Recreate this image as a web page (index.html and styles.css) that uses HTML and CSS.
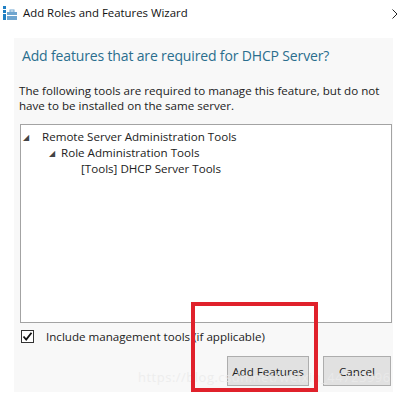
FILE: index.html
```html
<!DOCTYPE html>
<html>
<head>
<meta charset="utf-8">
<link rel="stylesheet" href="styles.css">
</head>
<body>
<div class="window">
  <div class="titlebar">
    <svg class="appicon" width="14" height="14" viewBox="0 0 14 14">
      <rect x="0" y="0" width="3" height="3" fill="#1f7fc4"/>
      <rect x="0" y="4" width="3" height="3" fill="#1f7fc4"/>
      <rect x="0" y="8" width="3" height="6" fill="#1f7fc4"/>
      <rect x="4" y="6" width="10" height="8" fill="#6fa5cf"/>
      <rect x="7" y="4" width="4" height="2" fill="none" stroke="#6fa5cf" stroke-width="1"/>
      <rect x="4" y="9" width="10" height="1" fill="#ffffff"/>
    </svg>
    <span class="title">Add Roles and Features Wizard</span>
    <svg class="close" width="6" height="10" viewBox="0 0 6 10">
      <path d="M0.5 0.5 L5 5 L0.5 9.5" fill="none" stroke="#222" stroke-width="1"/>
    </svg>
  </div>
  <div class="content">
    <h1 class="heading">Add features that are required for DHCP Server?</h1>
    <p class="desc">The following tools are required to manage this feature, but do not have to be installed on the same server.</p>
    <div class="tree">
      <div class="node lvl0"><span class="tri">&#9698;</span>Remote Server Administration Tools</div>
      <div class="node lvl1"><span class="tri">&#9698;</span>Role Administration Tools</div>
      <div class="node lvl2">[Tools] DHCP Server Tools</div>
    </div>
    <label class="check">
      <span class="box"><svg width="11" height="11" viewBox="0 0 11 11"><path d="M1.5 5.5 L4.2 8.5 L9.5 1.8" fill="none" stroke="#111" stroke-width="1.8"/></svg></span>
      Include management tools (if applicable)
    </label>
    <div class="buttons">
      <button class="btn add">Add Features</button>
      <button class="btn cancel">Cancel</button>
    </div>
    <div class="watermark">https://blog.csdn.net/weixin_44723996</div>
  </div>
  <div class="highlight"></div>
</div>
</body>
</html>
```
FILE: styles.css
```css
html, body {
  margin: 0;
  padding: 0;
  background: #ffffff;
}
body {
  font-family: "Segoe UI", "Open Sans", "Noto Sans", sans-serif;
  color: #1e1e1e;
  width: 398px;
  height: 397px;
  overflow: hidden;
}
.window {
  position: relative;
  width: 398px;
  height: 397px;
}
.titlebar {
  height: 38px;
  display: flex;
  align-items: flex-start;
  padding: 5px 0 0 3px;
  box-sizing: border-box;
}
.appicon {
  margin-top: 1px;
}
.title {
  margin-left: 6px;
  font-size: 11.4px;
  line-height: 16px;
  color: #111;
}
.close {
  margin-left: auto;
  margin-top: 4px;
  margin-right: 0;
}
.content {
  position: relative;
  margin-left: 14px;
  width: 379px;
  height: 354px;
  background: #f8f8f8;
  padding: 0 0 0 6px;
  box-sizing: border-box;
  display: flex;
  flex-direction: column;
}
.heading {
  margin: 8px 0 0 2px;
  font-weight: normal;
  font-size: 14px;
  letter-spacing: -0.15px;
  line-height: 20px;
  color: #2a6e8e;
}
.desc {
  margin: 17px 0 0 -1px;
  font-size: 11.6px;
  line-height: 15px;
  color: #222;
  width: 370px;
}
.tree {
  margin-top: 11px;
  width: 372px;
  height: 199px;
  box-sizing: border-box;
  background: #ffffff;
  border: 1px solid #a3a3a3;
  padding-top: 4px;
  font-size: 11.6px;
  line-height: 16px;
  color: #222;
}
.node {
  white-space: nowrap;
}
.tri {
  display: inline-block;
  font-size: 8px;
  width: 12px;
  color: #444;
  vertical-align: 1px;
}
.lvl0 { padding-left: 2px; }
.lvl0 .tri { width: 19px; }
.lvl1 { padding-left: 28px; }
.lvl1 .tri { width: 12px; }
.lvl2 { padding-left: 60px; }
.check {
  display: flex;
  align-items: center;
  margin-top: 6px;
  margin-left: 1px;
  font-size: 11.6px;
  color: #222;
  height: 15px;
}
.box {
  width: 11px;
  height: 11px;
  border: 1px solid #333;
  background: #fff;
  margin-right: 12px;
  display: flex;
  align-items: center;
  justify-content: center;
}
.buttons {
  display: flex;
  justify-content: flex-end;
  gap: 14px;
  margin-top: 12px;
  margin-right: 2px;
}
.btn {
  height: 30px;
  box-sizing: border-box;
  background: #e1e1e1;
  border: 1px solid #adadad;
  font-family: inherit;
  font-size: 11.6px;
  color: #222;
  padding: 0;
}
.add { width: 82px; }
.cancel { width: 68px; }
.watermark {
  position: absolute;
  left: 124px;
  top: 330px;
  font-size: 13px;
  color: rgba(235,235,235,0.85);
  letter-spacing: 0.5px;
  white-space: nowrap;
}
.highlight {
  position: absolute;
  left: 191px;
  top: 302px;
  width: 127px;
  height: 90px;
  box-sizing: border-box;
  border: 4px solid #e0212b;
}
```
